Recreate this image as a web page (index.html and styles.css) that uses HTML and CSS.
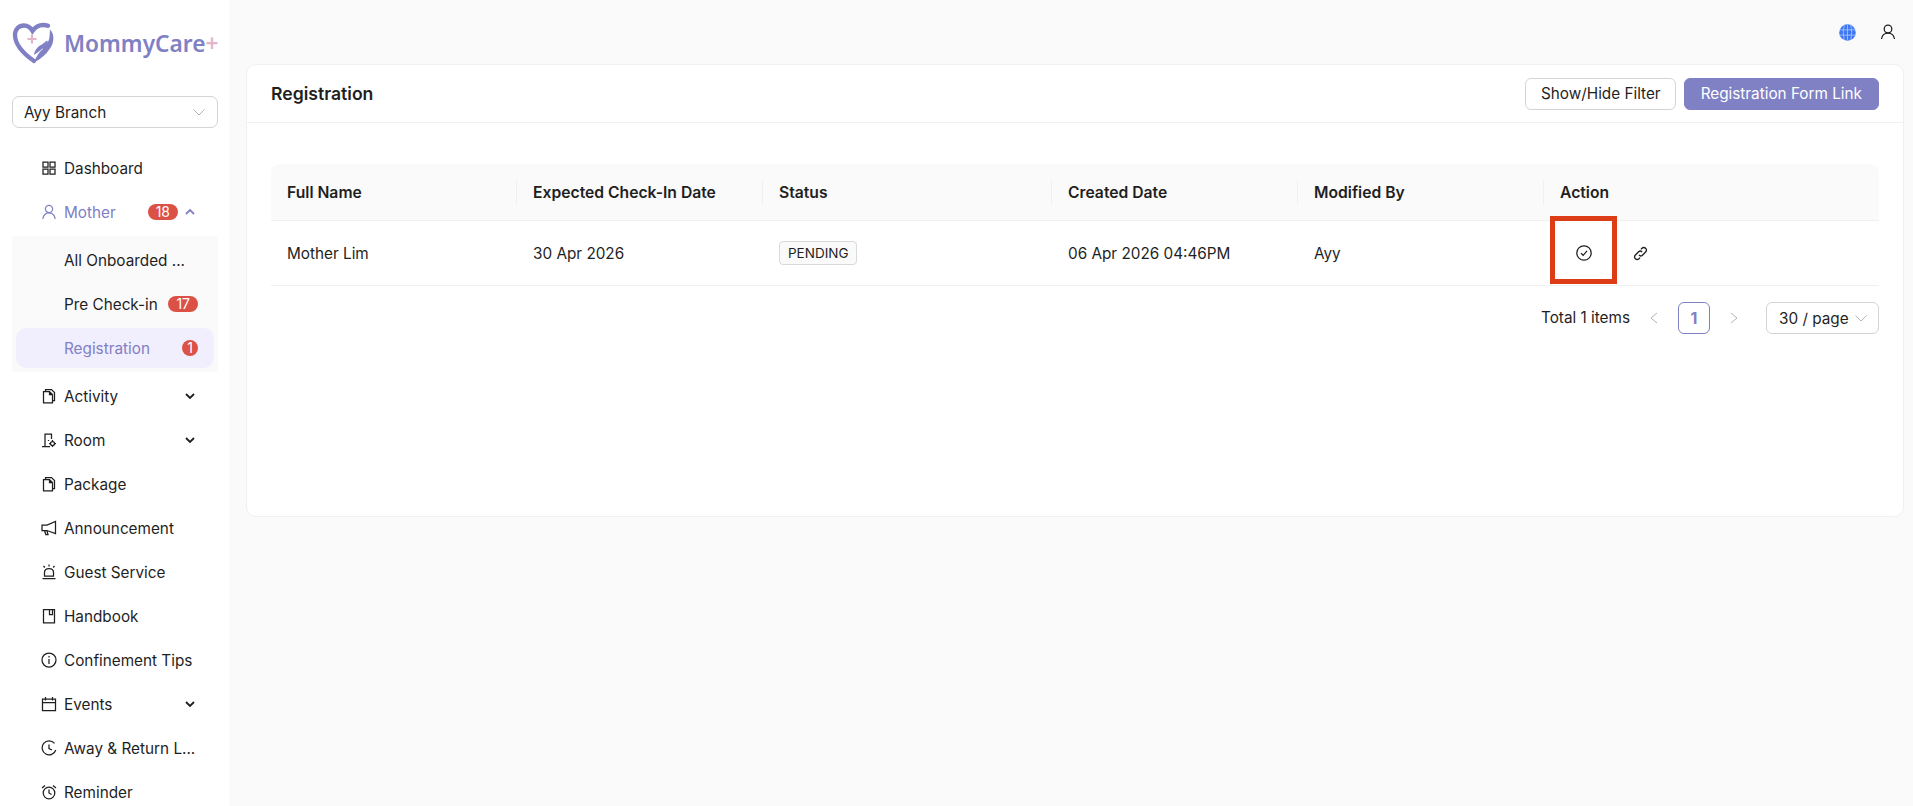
FILE: index.html
```html
<!DOCTYPE html>
<html>
<head>
    <meta charset="UTF-8">
    <title>MommyCare+ Registration</title>
    <link rel="stylesheet" href="styles.css">
</head>

<body>
    <div class="layout">
        <!-- sidebar -->
        <aside class="sidebar">
            <div class="logo">
                <svg class="logo-mark" width="44" height="42" viewBox="0 0 44 42">
                    <path class="logo-heart" d="M22 39 C12 32 3 23 3 13 C3 7 7 3.500 12 3.500 C15.500 3.500 18.500 5.500 20.500 9 C23 5.500 27 3 31 3 C33 3 34.500 3.200 36 3.800" />
                    <path class="logo-hand" d="M22 40.500 C24 35 27 30 31 27 L30 25 C34 23 37 20 37.500 15 L38 7.500 C41.500 11 42.500 17 40 23 C36 31 29 37 22 40.500 Z" />
                    <path class="logo-hand" d="M22 33 C22.500 28 26 24 30 22.500 L35 18.500 L36 20 C33 25 28 29 22 33 Z" />
                    <path class="logo-plus" d="M20 12.500 V21.500 M15.500 17 H24.500" />
                </svg>
                <span class="logo-text">MommyCare<span class="logo-sign">+</span></span>
            </div>

            <div class="branch-select">
                <span>Ayy Branch</span>
                <svg width="14" height="14" viewBox="0 0 14 14"><path class="thin" d="M1.500 4.500 L7 10 L12.500 4.500" /></svg>
            </div>

            <nav class="menu">
                <a class="menu-item">
                    <svg class="menu-icon" viewBox="0 0 16 16"><path d="M2 2h5v5H2zM9 2h5v5H9zM2 9h5v5H2zM9 9h5v5H9z" /></svg>
                    <span class="menu-label">Dashboard</span>
                </a>
                <a class="menu-item active">
                    <svg class="menu-icon" viewBox="0 0 16 16"><circle cx="8" cy="5" r="3.600" /><path d="M1.800 15 C2.300 11.300 4.800 8.800 8 8.800 C11.200 8.800 13.700 11.300 14.200 15" /></svg>
                    <span class="menu-label">Mother</span>
                    <span class="badge">18</span>
                    <svg class="chevron" viewBox="0 0 10 10"><path d="M1 7 L5 3 L9 7" /></svg>
                </a>
                <div class="submenu">
                    <a class="menu-item sub"><span class="menu-label">All Onboarded ...</span></a>
                    <a class="menu-item sub"><span class="menu-label">Pre Check-in</span><span class="badge">17</span></a>
                    <a class="menu-item sub selected"><span class="menu-label">Registration</span><span class="badge">1</span></a>
                </div>
                <a class="menu-item">
                    <svg class="menu-icon" viewBox="0 0 16 16"><use href="#file-icon" /></svg>
                    <span class="menu-label">Activity</span>
                    <svg class="chevron" viewBox="0 0 10 10"><path d="M1 3 L5 7 L9 3" /></svg>
                </a>
                <a class="menu-item">
                    <svg class="menu-icon" viewBox="0 0 16 16"><path d="M1 14.500 H4 V2 H10.500 V7 M4 14.500 H9 M7.500 8 V9" /><circle cx="11.500" cy="11.500" r="2" /><path d="M11.500 8 V9 M11.500 14 V15 M8 11.500 H9 M14 11.500 H15" /></svg>
                    <span class="menu-label">Room</span>
                    <svg class="chevron" viewBox="0 0 10 10"><path d="M1 3 L5 7 L9 3" /></svg>
                </a>
                <a class="menu-item">
                    <svg class="menu-icon" viewBox="0 0 16 16"><use href="#file-icon" /></svg>
                    <span class="menu-label">Package</span>
                </a>
                <a class="menu-item">
                    <svg class="menu-icon" viewBox="0 0 16 16"><path d="M14.500 1.500 V13.500 L6 10.500 H1 V5 H6 Z M3.500 10.500 L4.800 14.500 H7 L6 11" /></svg>
                    <span class="menu-label">Announcement</span>
                </a>
                <a class="menu-item">
                    <svg class="menu-icon" viewBox="0 0 16 16"><path d="M3.500 12 V8.500 C3.500 6 5.500 4.500 8 4.500 C10.500 4.500 12.500 6 12.500 8.500 V12 Z M1.500 14.500 H14.500 M8 .500 V2.500 M2.500 2 L3.800 3.500 M13.500 2 L12.200 3.500" /></svg>
                    <span class="menu-label">Guest Service</span>
                </a>
                <a class="menu-item">
                    <svg class="menu-icon" viewBox="0 0 16 16"><path d="M2.500 1.500 H13.500 V14.800 H2.500 Z M8.500 1.500 V6.500 H11.500 V1.500" /></svg>
                    <span class="menu-label">Handbook</span>
                </a>
                <a class="menu-item">
                    <svg class="menu-icon" viewBox="0 0 16 16"><circle cx="8" cy="8" r="7" /><path d="M8 7 V12 M8 4 V5.400" /></svg>
                    <span class="menu-label">Confinement Tips</span>
                </a>
                <a class="menu-item">
                    <svg class="menu-icon" viewBox="0 0 16 16"><path d="M1.500 3 H14.500 V14.500 H1.500 Z M1.500 6.500 H14.500 M4.500 1 V4.500 M11.500 1 V4.500" /></svg>
                    <span class="menu-label">Events</span>
                    <svg class="chevron" viewBox="0 0 10 10"><path d="M1 3 L5 7 L9 3" /></svg>
                </a>
                <a class="menu-item">
                    <svg class="menu-icon" viewBox="0 0 16 16"><path d="M13.500 3.300 A7 7 0 1 0 14.800 10 M8 4.500 V8.500 L11 10" /></svg>
                    <span class="menu-label">Away &amp; Return L...</span>
                </a>
                <a class="menu-item">
                    <svg class="menu-icon" viewBox="0 0 16 16"><circle cx="8" cy="9" r="5.800" /><path d="M8 5.500 V9 L10.500 10.500 M1 4 L4 1.500 M15 4 L12 1.500" /></svg>
                    <span class="menu-label">Reminder</span>
                </a>
            </nav>
        </aside>

        <!-- main -->
        <main class="main">
            <header class="topbar">
                <svg class="globe" width="17" height="17" viewBox="0 0 16 16">
                    <circle class="globe-disc" cx="8" cy="8" r="7.800" />
                    <path d="M0.500 5.500 H15.500 M0.500 10.500 H15.500 M8 .500 V15.500 M5 1 C3.800 5 3.800 11 5 15 M11 1 C12.200 5 12.200 11 11 15" />
                </svg>
                <svg class="top-user" width="16" height="16" viewBox="0 0 16 16">
                    <circle cx="8" cy="5" r="3.800" />
                    <path d="M1.500 15 C2 11.500 4.500 9 8 9 C11.500 9 14 11.500 14.500 15" />
                </svg>
            </header>

            <section class="card">
                <div class="card-head">
                    <h1>Registration</h1>
                    <div class="card-actions">
                        <button class="btn">Show/Hide Filter</button>
                        <button class="btn btn-primary">Registration Form Link</button>
                    </div>
                </div>
                <div class="card-body">
                    <table class="table">
                        <colgroup>
                            <col class="col-a"><col class="col-a"><col class="col-b"><col class="col-a"><col class="col-a"><col>
                        </colgroup>
                        <thead>
                            <tr>
                                <th>Full Name</th>
                                <th>Expected Check-In Date</th>
                                <th>Status</th>
                                <th>Created Date</th>
                                <th>Modified By</th>
                                <th>Action</th>
                            </tr>
                        </thead>
                        <tbody>
                            <tr>
                                <td>Mother Lim</td>
                                <td>30 Apr 2026</td>
                                <td><span class="tag">PENDING</span></td>
                                <td>06 Apr 2026 04:46PM</td>
                                <td>Ayy</td>
                                <td class="action-cell">
                                    <div class="actions">
                                        <svg width="16" height="16" viewBox="0 0 16 16"><circle cx="8" cy="8" r="7.200" /><path d="M5 8.300 L7.200 10.300 L11 5.800" /></svg>
                                        <svg width="17" height="17" viewBox="0 0 16 16"><path d="M6.500 9.500 C7.500 10.500 9 10.400 9.800 9.600 L12.800 6.600 C13.900 5.500 13.800 4 12.800 3.100 C11.900 2.200 10.400 2.200 9.400 3.100 L8.400 4.100 M9.500 6.500 C8.500 5.500 7 5.600 6.200 6.400 L3.200 9.400 C2.100 10.500 2.200 12 3.200 12.900 C4.100 13.800 5.600 13.800 6.600 12.900 L7.600 11.900" /></svg>
                                    </div>
                                    <div class="highlight"></div>
                                </td>
                            </tr>
                        </tbody>
                    </table>
                    <div class="pagination">
                        <span class="total">Total 1 items</span>
                        <svg class="page-arrow" width="10" height="12" viewBox="0 0 10 12"><path class="thin" d="M8 1 L2 6 L8 11" /></svg>
                        <span class="page-num">1</span>
                        <svg class="page-arrow" width="10" height="12" viewBox="0 0 10 12"><path class="thin" d="M2 1 L8 6 L2 11" /></svg>
                        <div class="page-size">
                            <span>30 / page</span>
                            <svg width="14" height="14" viewBox="0 0 14 14"><path class="thin" d="M1.500 4.500 L7 10 L12.500 4.500" /></svg>
                        </div>
                    </div>
                </div>
            </section>
        </main>
    </div>

    <svg class="sprite" width="0" height="0">
        <symbol id="file-icon" viewBox="0 0 16 16">
            <path d="M4.500 3.500 V1.500 H10.500 L13.500 4.500 V12.500 H11.500 M2.500 3.500 H8.500 L11.500 6.500 V14.800 H2.500 Z M8.500 3.500 V6.500 H11.500" />
        </symbol>
    </svg>
</body>
</html>
```

FILE: styles.css
```css
* {
    box-sizing: border-box;
}
html, body {
    height: 100%;
    margin: 0;
    overflow: hidden;
}
body {
    font-family: Inter, "Liberation Sans", sans-serif;
    font-size: 15.300px;
    color: #1f1f1f;
    background-color: #FAFAFA;
}
svg {
    fill: none;
    stroke: currentColor;
    stroke-width: 1.250;
    flex-shrink: 0;
}
.thin {
    stroke: #b4b4b4;
    stroke-width: 1;
}
.sprite {
    position: absolute;
}
.layout {
    display: flex;
    height: 806px;
    overflow: hidden;
}

/* sidebar */
.sidebar {
    width: 229px;
    flex-shrink: 0;
    background-color: #FFFFFF;
    padding: 0 11px 0 12px;
}
.logo {
    display: flex;
    align-items: center;
    height: 96px;
    padding-bottom: 10px;
}
.logo-mark {
    stroke: none;
    margin-right: 8px;
}
.logo-heart {
    stroke: #8080c4;
    stroke-width: 4.300;
    stroke-linecap: round;
}
.logo-hand {
    fill: #8080c4;
}
.logo-plus {
    stroke: #e4b4cb;
    stroke-width: 2.200;
}
.logo-text {
    font-family: "Noto Sans", sans-serif;
    font-size: 22.700px;
    font-weight: 600;
    color: #8080c4;
    white-space: nowrap;
}
.logo-sign {
    color: #e4b4cb;
}
.branch-select {
    display: flex;
    align-items: center;
    justify-content: space-between;
    height: 32px;
    padding: 0 11px;
    background-color: #FFFFFF;
    border: 1px solid #d4d4d4;
    border-radius: 7px;
}
.menu {
    margin-top: 20px;
}
.menu-item {
    display: flex;
    align-items: center;
    height: 40px;
    margin-bottom: 4px;
    padding: 0 23px 0 29px;
}
.menu-icon {
    width: 16px;
    height: 16px;
    margin-right: 7px;
}
.menu-label {
    flex: 1;
    white-space: nowrap;
}
.menu-item.active {
    color: #8080c4;
}
.menu-item.active .badge {
    margin-right: 7px;
}
.chevron {
    width: 10px;
    height: 10px;
    stroke-width: 1.800;
}
.badge {
    min-width: 16px;
    height: 16px;
    padding: 0 8px;
    border-radius: 8px;
    background-color: #db5146;
    color: #FFFFFF;
    font-size: 14px;
    line-height: 16px;
    text-align: center;
}
.submenu {
    background-color: #FAFAFA;
    margin-bottom: 4px;
    padding: 4px;
}
.submenu .menu-item {
    padding: 0 16px 0 48px;
    margin-bottom: 4px;
}
.submenu .menu-item:last-child {
    margin-bottom: 0;
}
.menu-item.selected {
    background-color: #f1eefe;
    border-radius: 10px;
    color: #8080c4;
}
.menu-item.selected .badge {
    padding: 0;
}

/* main */
.main {
    flex: 1;
    padding: 0 9px 0 17px;
}
.topbar {
    display: flex;
    align-items: center;
    justify-content: flex-end;
    gap: 24px;
    height: 64px;
    padding-right: 8px;
}
.globe {
    stroke: #a9c4fb;
    stroke-width: .8;
}
.globe-disc {
    stroke: none;
    fill: #3f78f0;
}
.card {
    height: 453px;
    background-color: #FFFFFF;
    border: 1px solid #f0f0f0;
    border-radius: 10px;
}
.card-head {
    display: flex;
    align-items: center;
    justify-content: space-between;
    height: 58px;
    padding: 0 24px;
    border-bottom: 1px solid #f0f0f0;
}
.card-head h1 {
    margin: 0;
    font-size: 17.600px;
    font-weight: 600;
}
.card-actions {
    display: flex;
    gap: 8px;
}
.btn {
    height: 32px;
    padding: 0 14px 0 15px;
    font-family: inherit;
    font-size: 15.300px;
    color: #1f1f1f;
    background-color: #FFFFFF;
    border: 1px solid #d4d4d4;
    border-radius: 6px;
}
.btn-primary {
    padding: 0 16px;
    color: #FFFFFF;
    background-color: #8080c4;
    border-color: #8080c4;
}
.card-body {
    padding: 41px 24px 0;
}
.table {
    width: 100%;
    border-collapse: separate;
    border-spacing: 0;
    table-layout: fixed;
}
.col-a {
    width: 246px;
}
.col-b {
    width: 289px;
}
.table th {
    position: relative;
    height: 57px;
    padding: 0 16px;
    text-align: left;
    font-size: 15.700px;
    font-weight: 600;
    background-color: #FAFAFA;
    border-bottom: 1px solid #f0f0f0;
}
.table th:first-child {
    border-top-left-radius: 8px;
}
.table th:last-child {
    border-top-right-radius: 8px;
}
.table th:not(:last-child)::after {
    content: "";
    position: absolute;
    top: 16px;
    right: 0;
    width: 1px;
    height: 25px;
    background-color: #f0f0f0;
}
.table td {
    height: 65px;
    padding: 0 16px;
    border-bottom: 1px solid #f0f0f0;
}
.tag {
    display: inline-block;
    height: 24px;
    padding: 0 7px 0 8px;
    font-size: 13.500px;
    line-height: 22px;
    background-color: #FAFAFA;
    border: 1px solid #d9d9d9;
    border-radius: 4px;
}
.action-cell {
    position: relative;
}
.actions {
    display: flex;
    align-items: center;
    gap: 40px;
    padding-left: 16px;
}
.highlight {
    position: absolute;
    top: -5px;
    left: 6px;
    width: 67px;
    height: 68px;
    border: 5px solid #dc3d16;
}
.pagination {
    display: flex;
    align-items: center;
    justify-content: flex-end;
    margin-top: 16px;
}
.total {
    margin: 0 19px 2px 0;
}
.page-arrow {
    margin: 0 19px 0 0;
}
.page-num {
    width: 32px;
    height: 32px;
    margin-right: 19px;
    text-align: center;
    font-size: 16px;
    line-height: 30px;
    font-weight: 700;
    color: #8080c4;
    border: 1px solid #8080c4;
    border-radius: 6px;
}
.page-size {
    display: flex;
    align-items: center;
    justify-content: space-between;
    width: 113px;
    height: 32px;
    margin-left: 8px;
    padding: 0 10px 0 12px;
    border: 1px solid #d4d4d4;
    border-radius: 6px;
}
```
